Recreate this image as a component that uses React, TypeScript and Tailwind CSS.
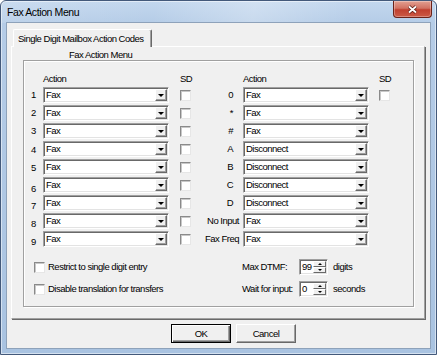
import type { ReactNode } from "react"

const leftRows = [
  { n: "1", v: "Fax", nudge: "" },
  { n: "2", v: "Fax", nudge: "" },
  { n: "3", v: "Fax", nudge: "" },
  { n: "4", v: "Fax", nudge: "translate-y-[1px]" },
  { n: "5", v: "Fax", nudge: "translate-y-[1px]" },
  { n: "6", v: "Fax", nudge: "translate-y-[4px]" },
  { n: "7", v: "Fax", nudge: "translate-y-[3px]" },
  { n: "8", v: "Fax", nudge: "translate-y-[3px]" },
  { n: "9", v: "Fax", nudge: "translate-y-[3px]" },
]

const rightRows = [
  { n: "0", v: "Fax", pad: "pr-[10px]", sd: true },
  { n: "*", v: "Fax", pad: "pr-[10px]", sd: false },
  { n: "#", v: "Fax", pad: "pr-[10px]", sd: false },
  { n: "A", v: "Disconnect", pad: "pr-[10px]", sd: false },
  { n: "B", v: "Disconnect", pad: "pr-[10px]", sd: false },
  { n: "C", v: "Disconnect", pad: "pr-[10px]", sd: false },
  { n: "D", v: "Disconnect", pad: "pr-[10px]", sd: false },
  { n: "No Input", v: "Fax", pad: "pr-[4px]", sd: false },
  { n: "Fax Freq", v: "Fax", pad: "pr-[4px]", sd: false },
]

function Checkbox() {
  return (
    <span className="block h-[11px] w-[11px] shrink-0 border border-t-[#8a8a8a] border-l-[#8a8a8a] border-b-[#e6e6e6] border-r-[#e6e6e6] bg-white shadow-[inset_1px_1px_0_#c8c8c8]" />
  )
}

function Combo({ value }: { value: string }) {
  return (
    <div className="flex h-[16px] w-[126px] shrink-0 items-center border border-t-[#a0a0a0] border-l-[#a0a0a0] border-b-white border-r-white bg-white shadow-[inset_1px_1px_0_#696969,inset_-1px_-1px_0_#e3e3e3]">
      <span className="flex-1 pl-[2px]">{value}</span>
      <div className="m-[1px] flex h-[12px] w-[12px] items-center justify-center border border-t-white border-l-white border-r-[#696969] border-b-[#696969] bg-[#f0f0f0] shadow-[inset_-1px_-1px_0_#a0a0a0]">
        <span className="mt-[1px] block h-0 w-0 border-x-[3px] border-t-[3px] border-x-transparent border-t-black" />
      </div>
    </div>
  )
}

function SpinHalf({ up }: { up?: boolean }) {
  return (
    <div className="flex h-[6px] items-center justify-center border border-t-white border-l-white border-r-[#696969] border-b-[#696969] bg-[#f0f0f0]">
      {up ? (
        <span className="block h-0 w-0 border-x-[2px] border-b-[2px] border-x-transparent border-b-black" />
      ) : (
        <span className="block h-0 w-0 border-x-[2px] border-t-[2px] border-x-transparent border-t-black" />
      )}
    </div>
  )
}

function Spinner({ value }: { value: string }) {
  return (
    <div className="flex h-[16px] w-[29px] shrink-0 border border-t-[#a0a0a0] border-l-[#a0a0a0] border-b-white border-r-white bg-white shadow-[inset_1px_1px_0_#696969,inset_-1px_-1px_0_#e3e3e3]">
      <span className="flex-1 self-center pl-[2px]">{value}</span>
      <div className="my-[1px] mr-[1px] flex w-[13px] flex-col">
        <SpinHalf up />
        <SpinHalf />
      </div>
    </div>
  )
}

function DialogButton({ children, isDefault }: { children: ReactNode; isDefault?: boolean }) {
  return isDefault ? (
    <button className="flex h-[19px] w-[60px] items-center justify-center border border-black bg-[#f0f0f0] shadow-[inset_1px_1px_0_#fff,inset_-1px_-1px_0_#696969,inset_-2px_-2px_0_#a0a0a0]">
      {children}
    </button>
  ) : (
    <button className="flex h-[19px] w-[60px] items-center justify-center border border-t-white border-l-white border-r-[#696969] border-b-[#696969] bg-[#f0f0f0] shadow-[inset_-1px_-1px_0_#a0a0a0]">
      {children}
    </button>
  )
}

function CloseButton() {
  return (
    <div className="mr-[4px] flex h-[17px] w-[39px] items-center justify-center rounded-b-[4px] border border-t-0 border-[#6b2219] bg-[linear-gradient(180deg,#e2a092_0%,#d27262_45%,#c0402f_55%,#cc5a46_100%)] shadow-[inset_0_0_0_1px_rgba(255,255,255,0.3)]">
      <svg width="11" height="9" viewBox="0 0 11 9">
        <path d="M2 1.5 L9 7.5 M9 1.5 L2 7.5" stroke="#5a1a12" strokeWidth="3.4" />
        <path d="M2 1.5 L9 7.5 M9 1.5 L2 7.5" stroke="#fff" strokeWidth="1.8" />
      </svg>
    </div>
  )
}

export default function App() {
  return (
    <div className="h-[355px] w-[437px] overflow-hidden whitespace-nowrap bg-white font-['Liberation_Sans',Arial,sans-serif] text-[9.5px] leading-[12px] tracking-[-0.5px] text-black">
      <div className="flex h-[355px] w-[437px] flex-col rounded-t-[6px] border border-[#43597a] bg-[linear-gradient(180deg,#c3d7ee_0px,#b5cce7_22px,#a9c3e1_100%)] shadow-[inset_0_0_0_1px_rgba(255,255,255,0.5)]">
        {/* title bar */}
        <div className="flex h-[22px] shrink-0 justify-between bg-[linear-gradient(100deg,rgba(255,255,255,0.12)_0%,rgba(255,255,255,0)_35%,rgba(255,255,255,0.25)_58%,rgba(255,255,255,0)_80%)]">
          <span className="self-center pl-[6px] text-[10.5px] tracking-[-0.4px]">Fax Action Menu</span>
          <CloseButton />
        </div>

        {/* client */}
        <div className="ml-[6px] flex h-[325px] w-[423px] flex-col bg-[#f0f0f0] pt-[6px] shadow-[0_0_0_1px_#8ea2ba]">
          <div className="relative z-10 -mb-px ml-[6px] flex h-[18px] w-[139px] items-center rounded-t-[2px] border border-b-0 border-l-white border-t-white border-r-[#696969] bg-[#f0f0f0] pl-[4px] shadow-[inset_-1px_0_0_#a0a0a0]">
            Single Digit Mailbox Action Codes
          </div>

          <div className="ml-[4px] h-[273px] w-[414px] border border-l-white border-t-white border-r-[#a0a0a0] border-b-[#a0a0a0] shadow-[1px_1px_0_#696969]">
            <div className="h-[13px] pl-[57px] pt-[2px] leading-[11px]">Fax Action Menu</div>

            <div className="ml-[11px] w-[391px] border border-[#a0a0a0] pb-[9px] pt-[11px] shadow-[inset_1px_1px_0_#fff,1px_1px_0_#fff]">
              <div className="flex flex-col gap-[2px]">
                <div className="flex h-[13px] items-center">
                  <span className="w-[19px]" />
                  <span className="w-[126px]">Action</span>
                  <span className="ml-[11px] w-[11px]">SD</span>
                  <span className="w-[52px]" />
                  <span className="w-[126px]">Action</span>
                  <span className="ml-[10px] w-[11px]">SD</span>
                </div>
                {leftRows.map((l, i) => {
                  const r = rightRows[i]
                  return (
                    <div key={l.n} className="flex h-[16px] items-center">
                      <span className={`w-[19px] text-center ${l.nudge}`}>{l.n}</span>
                      <Combo value={l.v} />
                      <span className="ml-[11px]">
                        <Checkbox />
                      </span>
                      <span className={`w-[52px] text-right ${r.pad}`}>{r.n}</span>
                      <Combo value={r.v} />
                      <span className="ml-[10px]">{r.sd ? <Checkbox /> : null}</span>
                    </div>
                  )
                })}
              </div>

              <div className="mt-[12px] flex">
                <div className="flex w-[218px] flex-col gap-[6px] pl-[10px]">
                  <div className="flex h-[16px] items-center gap-[3px]">
                    <Checkbox />
                    <span>Restrict to single digit entry</span>
                  </div>
                  <div className="flex h-[16px] items-center gap-[3px]">
                    <Checkbox />
                    <span>Disable translation for transfers</span>
                  </div>
                </div>
                <div className="flex flex-col gap-[6px]">
                  <div className="flex h-[16px] items-center">
                    <span className="w-[57px]">Max DTMF:</span>
                    <Spinner value="99" />
                    <span className="ml-[5px]">digits</span>
                  </div>
                  <div className="flex h-[16px] items-center">
                    <span className="w-[57px]">Wait for input:</span>
                    <Spinner value="0" />
                    <span className="ml-[5px]">seconds</span>
                  </div>
                </div>
              </div>
            </div>
          </div>

          <div className="mt-[5px] flex gap-[5px] pl-[164px]">
            <DialogButton isDefault>OK</DialogButton>
            <DialogButton>Cancel</DialogButton>
          </div>
        </div>
      </div>
    </div>
  )
}
